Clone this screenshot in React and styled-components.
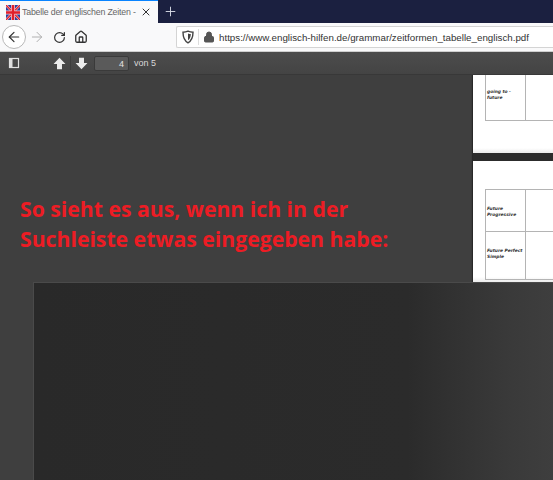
import React from 'react';
import styled, { createGlobalStyle } from 'styled-components';
import { ArrowLeft, ArrowRight, RotateCw, House, X, Plus, Lock } from 'lucide-react';

const GlobalStyle = createGlobalStyle`
  html, body { margin: 0; padding: 0; background: #404040; }
  * { box-sizing: border-box; }
`;

const Window = styled.div`
  width: 553px;
  height: 480px;
  overflow: hidden;
  display: flex;
  flex-direction: column;
  font-family: "Liberation Sans", sans-serif;
`;

const TabBar = styled.div`
  height: 23px;
  flex: none;
  display: flex;
  align-items: stretch;
  background: #1b2040;
`;

const Tab = styled.div`
  width: 158px;
  display: flex;
  align-items: center;
  padding: 0 6px;
  background: #f9f9fa;
  border-top: 1px solid #0a84ff;
  font-size: 8.8px;
  letter-spacing: -0.2px;
  color: #666;
  white-space: nowrap;
`;

const TabTitle = styled.span`
  flex: 1;
  min-width: 0;
  margin-left: 2px;
`;

const NewTab = styled.div`
  width: 24px;
  display: flex;
  align-items: center;
  justify-content: center;
  color: #d8dae4;
`;

const NavBar = styled.div`
  height: 29px;
  flex: none;
  display: flex;
  align-items: center;
  padding-left: 2px;
  background: #f9f9fa;
  border-bottom: 1px solid #cfcfcf;
`;

const BackButton = styled.div`
  width: 24px;
  height: 24px;
  flex: none;
  border: 1px solid #b8b8b8;
  border-radius: 50%;
  background: #fff;
  display: flex;
  align-items: center;
  justify-content: center;
  color: #333;
`;

const NavIcon = styled.div`
  width: 22px;
  flex: none;
  display: flex;
  justify-content: center;
  color: ${p => (p.$disabled ? '#b0b0b0' : '#333')};
`;

const UrlBar = styled.div`
  margin-left: 84px;
  flex: 1;
  min-width: 0;
  height: 22px;
  display: flex;
  align-items: center;
  padding-left: 4px;
  background: #fff;
  border: 1px solid #d4d4d4;
  border-right: none;
  border-radius: 2px 0 0 2px;
  font-size: 9.75px;
  color: #333;
  white-space: nowrap;
  svg {
    flex: none;
  }
`;

const Divider = styled.span`
  width: 1px;
  height: 16px;
  flex: none;
  margin: 0 4px 0 3px;
  background: #ddd;
`;

const UrlText = styled.span`
  margin-left: 4px;
`;

const PdfToolbar = styled.div`
  height: 23px;
  flex: none;
  display: flex;
  align-items: center;
  padding-left: 8px;
  background: linear-gradient(180deg, #4c4c4c 0, #444 100%);
  border-bottom: 1px solid #383838;
  color: #d8d8d8;
  font-size: 9px;
`;

const PdfButton = styled.div`
  width: 22px;
  flex: none;
  display: flex;
  justify-content: center;
  margin-left: ${p => p.$gap || 0}px;
`;

const ToolSeparator = styled.span`
  width: 1px;
  height: 14px;
  margin-right: -1px;
  background: #3c3c3c;
`;

const PageInput = styled.div`
  width: 35px;
  height: 15px;
  margin: 0 5px 0 2px;
  padding-right: 4px;
  text-align: right;
  line-height: 14px;
  background: #5a5a5a;
  border: 1px solid #3a3a3a;
  border-radius: 2px;
  color: #e4e4e4;
`;

const Viewer = styled.div`
  position: relative;
  flex: 1;
  display: flex;
  justify-content: space-between;
  overflow: hidden;
  background: #3f3f3f;
`;

const Note = styled.p`
  margin: 119px 0 0 20px;
  font-family: "Open Sans", sans-serif;
  font-size: 21.2px;
  line-height: 30px;
  font-weight: 700;
  color: #ed1c24;
  white-space: nowrap;
`;

const Pages = styled.div`
  width: 80px;
  flex: none;
  display: flex;
  flex-direction: column;
  gap: 8px;
  background: #2c2c2c;
  box-shadow: -1px 0 1px rgba(0, 0, 0, 0.35);
`;

const Page = styled.div`
  height: ${p => p.$h}px;
  flex: none;
  overflow: hidden;
  background: linear-gradient(180deg, #fff calc(100% - 5px), #ececec 100%);
  padding-left: 12px;
  padding-top: ${p => p.$top}px;
`;

const Table = styled.div`
  width: 160px;
  display: grid;
  grid-template-columns: 40px 1fr;
  border-left: 1px solid #b4b4b4;
  border-top: ${p => (p.$open ? 'none' : '1px solid #b4b4b4')};
`;

const Cell = styled.div`
  height: ${p => p.$h}px;
  border-right: 1px solid #b4b4b4;
  border-bottom: 1px solid #b4b4b4;
  padding: ${p => p.$pad}px 0 0 1px;
  font-family: "DejaVu Sans", sans-serif;
  font-size: 4.4px;
  line-height: 5.5px;
  font-weight: 700;
  font-style: italic;
  color: #333;
  white-space: nowrap;
`;

const Overlay = styled.div`
  position: absolute;
  left: 33px;
  right: 0;
  top: 207px;
  bottom: 0;
  background: linear-gradient(90deg, #292929 0, #2b2b2b 72%, #3a3a3a 92%, #3e3e3e 100%);
  border-top: 1px solid #4a4a4a;
  border-left: 1px solid #4a4a4a;
`;

const FlagIcon = () => (
  <svg width="14" height="15" viewBox="0 0 14 15">
    <rect width="14" height="15" fill="#2b3f9e" />
    <path d="M0 0L14 15M14 0L0 15" stroke="#f4c8d0" strokeWidth="2.5" />
    <path d="M0 0L14 15M14 0L0 15" stroke="#e0202c" strokeWidth="1.2" />
    <path d="M7 0V15M0 7.5H14" stroke="#f4c8d0" strokeWidth="4" />
    <path d="M7 0V15M0 7.5H14" stroke="#e0202c" strokeWidth="2.5" />
  </svg>
);

const ShieldIcon = () => (
  <svg width="14" height="14" viewBox="0 0 14 14" fill="none">
    <path d="M7 1.2c2 .9 3.6 1.1 5 1.1 0 5-1.4 8.5-5 10.5C3.4 10.8 2 7.3 2 2.3c1.4 0 3-.2 5-1.100z" stroke="#444" strokeWidth="1.4" />
    <path d="M7 3.4c1 .4 1.8.6 2.8.6 0 3-.9 5-2.8 6.3z" fill="#444" />
  </svg>
);

const SidebarIcon = () => (
  <svg width="12" height="12" viewBox="0 0 12 12" fill="none">
    <rect x="1.5" y="1.5" width="9" height="9" stroke="#e0e0e0" strokeWidth="1.2" />
    <rect x="2" y="2" width="2.5" height="8" fill="#e0e0e0" />
  </svg>
);

const BlockArrow = ({ down }) => (
  <svg width="13" height="13" viewBox="0 0 12 12" style={down ? { transform: 'rotate(180deg)' } : undefined}>
    <path d="M6 .8L11.5 6.5H8.3V11.2H3.7V6.5H.5z" fill="#ececec" />
  </svg>
);

export default function App() {
  return (
    <Window>
      <GlobalStyle />
      <TabBar>
        <Tab>
          <FlagIcon />
          <TabTitle>Tabelle der englischen Zeiten -</TabTitle>
          <X size={12} color="#333" strokeWidth={2} />
        </Tab>
        <NewTab>
          <Plus size={15} strokeWidth={1.5} />
        </NewTab>
      </TabBar>
      <NavBar>
        <BackButton>
          <ArrowLeft size={16} strokeWidth={1.8} />
        </BackButton>
        <NavIcon $disabled>
          <ArrowRight size={16} strokeWidth={1.5} />
        </NavIcon>
        <NavIcon>
          <RotateCw size={13} strokeWidth={2.2} />
        </NavIcon>
        <NavIcon>
          <House size={14} strokeWidth={2.2} />
        </NavIcon>
        <UrlBar>
          <ShieldIcon />
          <Divider />
          <Lock size={12} color="#555" fill="#555" />
          <UrlText>https://www.englisch-hilfen.de/grammar/zeitformen_tabelle_englisch.pdf</UrlText>
        </UrlBar>
      </NavBar>
      <PdfToolbar>
        <SidebarIcon />
        <PdfButton $gap={28}>
          <BlockArrow />
        </PdfButton>
        <ToolSeparator />
        <PdfButton>
          <BlockArrow down />
        </PdfButton>
        <PageInput>4</PageInput>
        <span>von 5</span>
      </PdfToolbar>
      <Viewer>
        <Note>
          So sieht es aus, wenn ich in der
          <br />
          Suchleiste etwas eingegeben habe:
        </Note>
        <Pages>
          <Page $h={78} $top={0}>
            <Table $open>
              <Cell $h={46} $pad={14}>
                going to -
                <br />
                future
              </Cell>
              <Cell $h={46} />
            </Table>
          </Page>
          <Page $h={121} $top={28}>
            <Table>
              <Cell $h={42} $pad={16}>
                Future
                <br />
                Progressive
              </Cell>
              <Cell $h={42} />
              <Cell $h={48} $pad={16}>
                Future Perfect
                <br />
                Simple
              </Cell>
              <Cell $h={48} />
            </Table>
          </Page>
        </Pages>
        <Overlay />
      </Viewer>
    </Window>
  );
}
